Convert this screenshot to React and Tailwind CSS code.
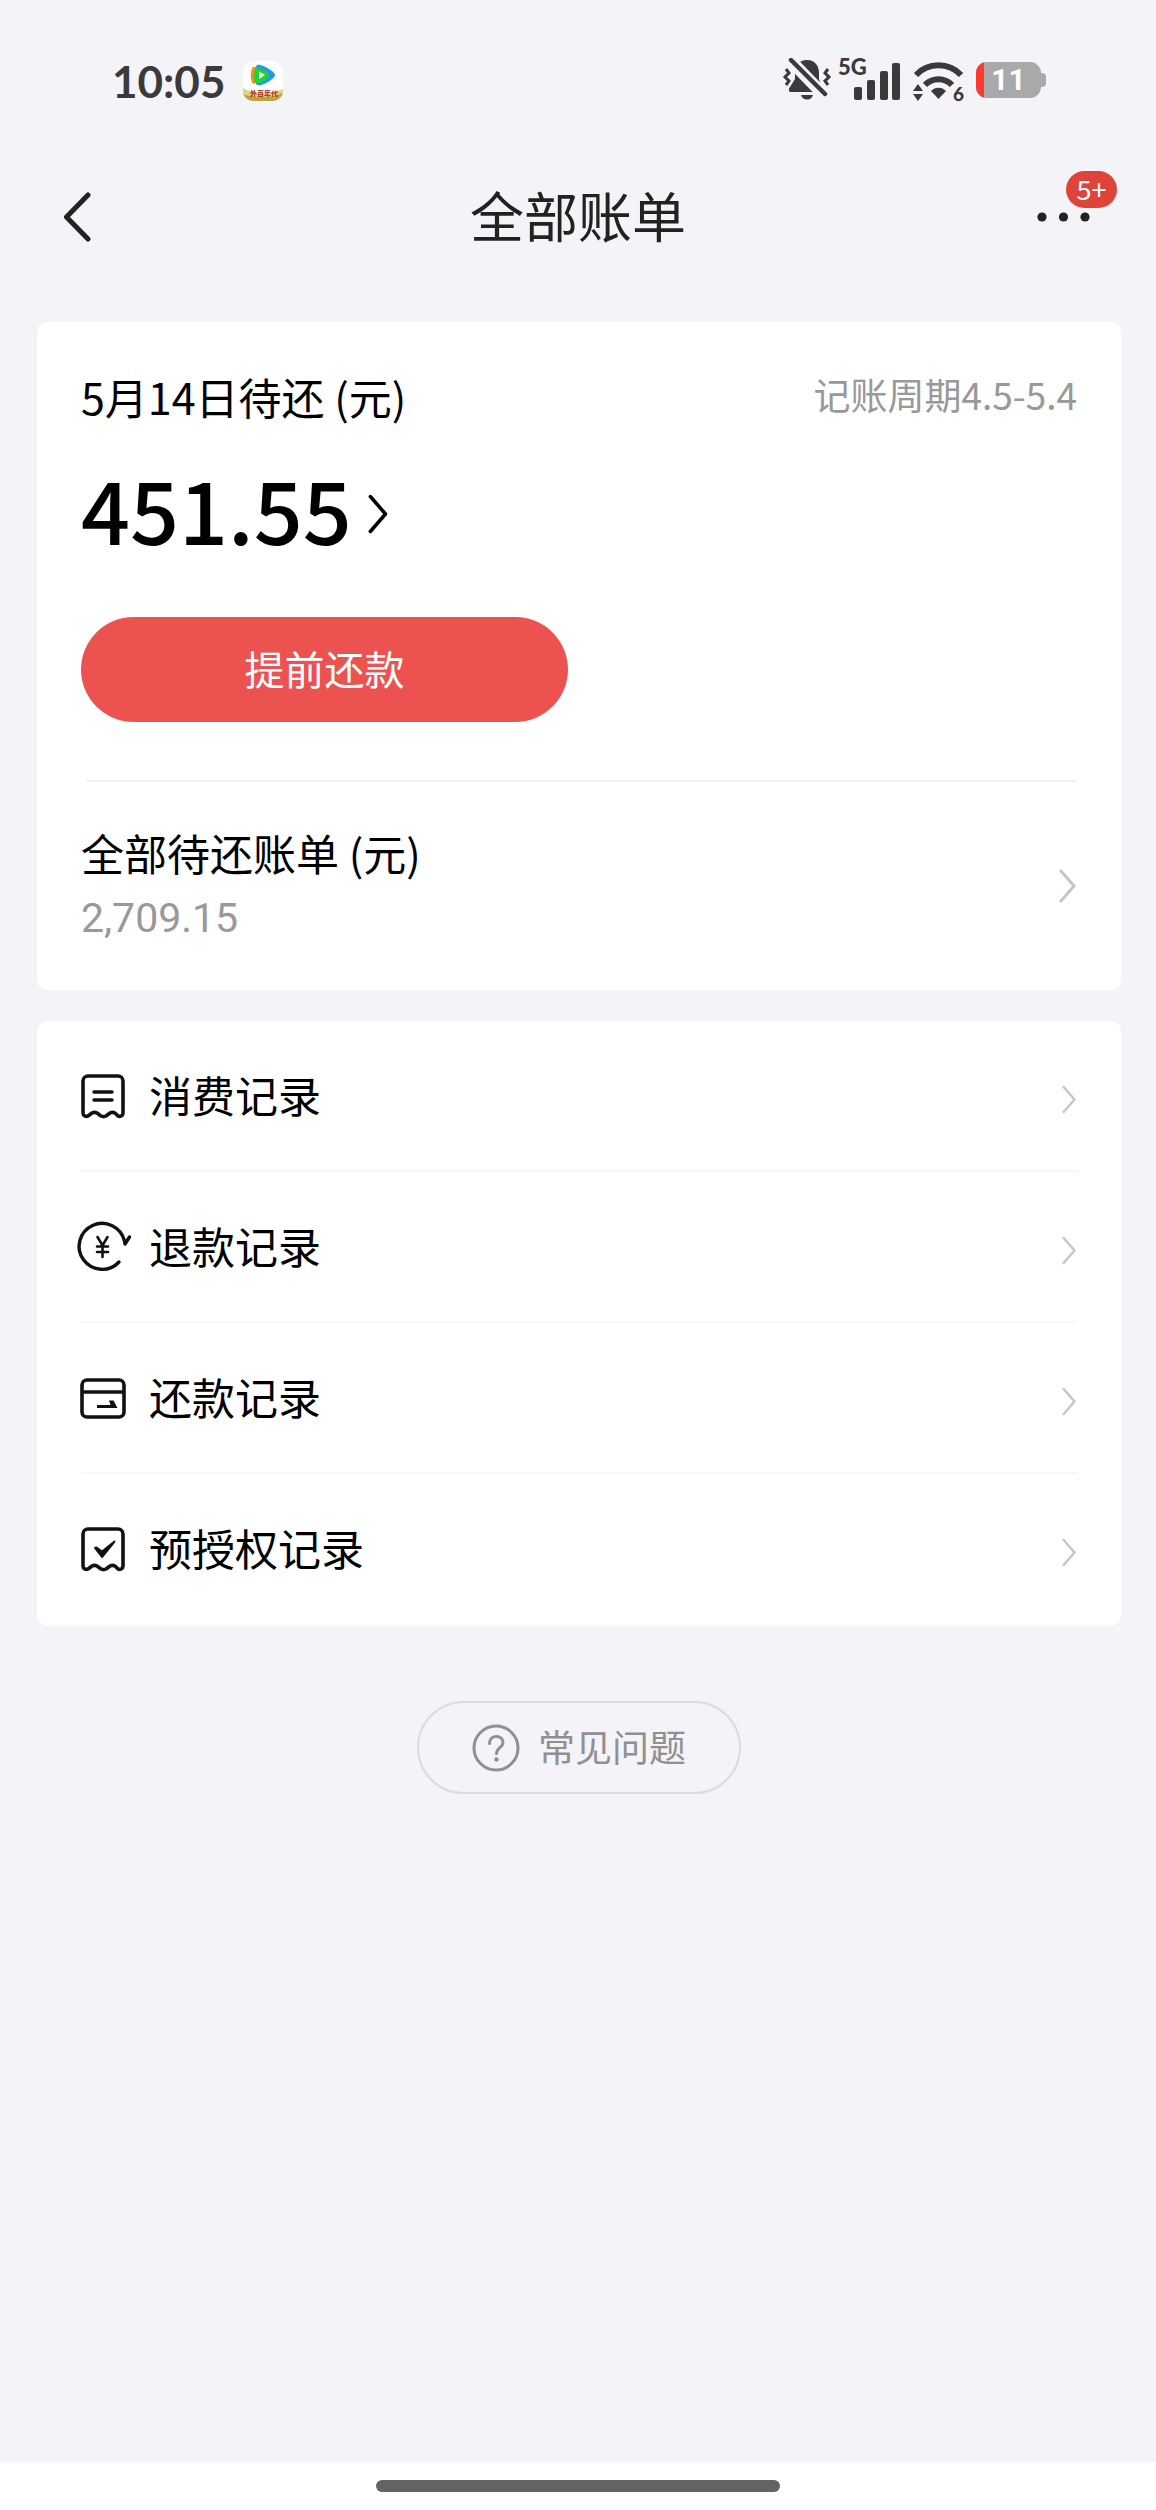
// App.jsx — all bills overview

const RECORDS = [
  { label: '消费记录',   Icon: ReceiptIcon },
  { label: '退款记录',   Icon: RefundIcon },
  { label: '还款记录',   Icon: RepayIcon },
  { label: '预授权记录', Icon: PreAuthIcon },
]

/* ── Icons ─────────────────────────────────────────── */

function Chevron({ className }) {
  return (
    <svg viewBox="0 0 18 34" className={className} fill="none" stroke="currentColor" aria-hidden="true">
      <path d="M2 2 15 17 2 32" strokeWidth="3" strokeLinecap="round" strokeLinejoin="round" />
    </svg>
  )
}

const RECEIPT_OUTLINE =
  'M9 4h30a5 5 0 0 1 5 5v32c0 3-3 4-5 3l-3-3c-2-1-3-1-5 0l-4 3c-2 1-3 1-5 0l-4-3c-2-1-3-1-5 0l-4 3c-2 1-5 0-5-3V9a5 5 0 0 1 5-5z'

function ReceiptIcon() {
  return (
    <svg viewBox="0 0 48 48" className="size-12" fill="none" stroke="#111" strokeWidth="3.6" aria-hidden="true">
      <path d={RECEIPT_OUTLINE} strokeLinejoin="round" />
      <path d="M15 20h18M15 28h18" strokeLinecap="round" strokeWidth="3.4" />
    </svg>
  )
}

function RefundIcon() {
  return (
    <svg viewBox="0 0 52 52" className="size-[52px] overflow-visible" fill="none" stroke="#111" strokeWidth="3.4" aria-hidden="true">
      <path d="M42 41A23 23 0 1 1 47.500 20l.5 3 4.500-7" strokeLinecap="round" strokeLinejoin="round" />
      <path d="m20.500 16 5 8.500 5-8.500M25.500 24.500V36M20 25.500h11M20 31h11" strokeWidth="2.6" strokeLinecap="round" />
    </svg>
  )
}

function RepayIcon() {
  return (
    <svg viewBox="0 0 48 48" className="size-12" fill="none" stroke="#111" strokeWidth="3.6" aria-hidden="true">
      <rect x="3" y="6" width="42" height="37" rx="5" />
      <path d="M3 18h42" strokeWidth="3.4" />
      <path d="M18 31h13.500L30 26.500h4.500L38.500 34H18z" fill="#111" stroke="none" />
    </svg>
  )
}

function PreAuthIcon() {
  return (
    <svg viewBox="0 0 48 48" className="size-12" fill="none" stroke="#111" strokeWidth="3.6" aria-hidden="true">
      <path d={RECEIPT_OUTLINE} strokeLinejoin="round" />
      <path d="m16 23 7 9L35.500 16.500 23 26.500l-5.500-4z" fill="#111" strokeWidth="2" strokeLinejoin="round" />
    </svg>
  )
}

function HelpIcon() {
  return (
    <svg viewBox="0 0 48 48" className="size-12" fill="none" stroke="#909092" strokeWidth="3" aria-hidden="true">
      <circle cx="24" cy="24" r="22" />
      <path d="M17.500 19.500c0-4.500 3-7 6.800-7s6.700 2.500 6.700 6c0 5-6.500 5.500-6.500 11" strokeLinecap="round" />
      <circle cx="24.500" cy="35.500" r="2.200" fill="#909092" stroke="none" />
    </svg>
  )
}

function VideoAppIcon() {
  return (
    <svg viewBox="0 0 40 40" className="size-10" aria-hidden="true">
      <defs>
        <clipPath id="app-tile"><rect width="40" height="40" rx="10" /></clipPath>
      </defs>
      <g clipPath="url(#app-tile)">
        <rect width="40" height="40" fill="#fff" />
        <path d="M0 27c6 4 12 5 20 5s14-1 20-4v12H0z" fill="#e3d27a" />
        <path d="M0 33c10 4 28 4 40-1v8H0z" fill="#b9a544" />
        <path d="M10 6c-3 4-3 13 0 17l5-2V6z" fill="#ff8a1e" />
        <path d="M14 4c3-2 18 6 18 10S18 26 14 24s-2-18 0-20z" fill="#1e9be8" />
        <path d="M13 7c3-1 13 4 13 7s-9 10-13 8-2-14 0-15z" fill="#23cf3a" />
        <path d="M16 10.500 22 14l-6 4z" fill="#fff" />
        <text x="7" y="35" fontSize="7" fontWeight="700" fill="#a8231c">外百年代</text>
      </g>
    </svg>
  )
}

function MutedBellIcon() {
  return (
    <svg viewBox="0 0 50 44" className="-mr-1.5 h-11 w-[50px]" fill="#3a3a3c" aria-hidden="true">
      <path d="M25 2c8 0 12 6 12 13v6l4 13H8c-2-2-1-4 0-5l5-8v-6c0-7 4-13 12-13z" />
      <path d="M19 37h12c-1 3-3 4.500-6 4.500S20 40 19 37z" />
      <path d="M4 -2 42 37" stroke="#f3f3f8" strokeWidth="12" />
      <path d="M9 2 43 36" stroke="#3a3a3c" strokeWidth="4.500" strokeLinecap="round" />
      <path d="M4 11l3 4-4 4 4 4-3 4M46 11l-3 4 4 4-4 4 3 4" fill="none" stroke="#3a3a3c" strokeWidth="3" />
    </svg>
  )
}

function Signal() {
  return (
    <div className="relative">
      <svg viewBox="0 0 62 44" className="h-11 w-[62px]" fill="#3a3a3c" aria-hidden="true">
        <rect x="16" y="29" width="8" height="13" rx="2" />
        <rect x="29" y="22" width="8" height="20" rx="2" />
        <rect x="42" y="13" width="8" height="29" rx="2" />
        <rect x="54" y="5" width="8" height="37" rx="2" />
      </svg>
      <span className="absolute -top-3 left-0 font-['Lato'] text-[22px] leading-[42px] font-black">5G</span>
    </div>
  )
}

function Wifi() {
  return (
    <div className="relative">
      <svg viewBox="0 0 52 44" className="h-11 w-[52px]" fill="#3a3a3c" aria-hidden="true">
        <path d="M4 17a31 31 0 0 1 45 0" fill="none" stroke="#3a3a3c" strokeWidth="6" />
        <path d="M13 27a19 19 0 0 1 27 0" fill="none" stroke="#3a3a3c" strokeWidth="6" />
        <path d="M19 33c4-4.500 11-4.500 15 0l-7.500 8z" />
        <path d="M1 33l5-7 5 7zM1 36h10l-5 7z" />
      </svg>
      <span className="absolute right-0 -bottom-1.5 font-['Lato'] text-[19px] leading-[28px] font-black">6</span>
    </div>
  )
}

function Battery() {
  return (
    <div className="flex items-center" aria-label="11%">
      <div className="flex h-9 w-[65px] overflow-hidden rounded-[11px] bg-[#a9a9ac]">
        <div className="w-2 bg-[#fb3b30]" />
        <span className="flex-1 pr-2 text-center font-['Roboto'] text-[30px] leading-[36px] font-bold text-white">11</span>
      </div>
      <div className="h-3.5 w-[5px] rounded-r-[4px] bg-[#a9a9ac]" />
    </div>
  )
}

/* ── Page sections ─────────────────────────────────── */

function StatusBar() {
  return (
    <div className="flex h-[160px] items-center justify-between pl-[112px] pr-[110px] text-[#3a3a3c]">
      <div className="flex items-center gap-[18px] pt-0.5">
        <span className="font-['Lato'] text-[44px] leading-[52px] font-bold">10:05</span>
        <VideoAppIcon />
      </div>
      <div className="flex items-center gap-3">
        <MutedBellIcon />
        <Signal />
        <Wifi />
        <Battery />
      </div>
    </div>
  )
}

function Header() {
  return (
    <header className="grid h-[114px] grid-cols-[1fr_auto_1fr] items-center px-16">
      <button type="button" aria-label="返回" className="justify-self-start">
        <svg viewBox="0 0 30 52" className="h-[52px] w-[30px]" fill="none" stroke="#222" aria-hidden="true">
          <path d="M24 4 2.500 26 24 48" strokeWidth="5" strokeLinecap="round" strokeLinejoin="round" />
        </svg>
      </button>
      <h1 className="pb-1 text-[54px] leading-[64px] text-[#222]">全部账单</h1>
      <button type="button" aria-label="更多" className="relative justify-self-end">
        <svg viewBox="0 0 56 20" className="h-5 w-14" fill="#222" aria-hidden="true">
          <circle cx="6" cy="10" r="4.600" />
          <circle cx="27.500" cy="10" r="4.600" />
          <circle cx="49" cy="10" r="4.600" />
        </svg>
        <span className="absolute -top-9 left-[30px] flex h-[37px] w-[51px] items-center justify-center rounded-full bg-[#e04339] pb-0.5 text-[27px] leading-none text-white">
          5+
        </span>
      </button>
    </header>
  )
}

function BillCard() {
  return (
    <section className="rounded-[10px] bg-white px-11 pt-[44px] pb-[44px]">
      <div className="flex items-start justify-between">
        <h2 className="text-[43px] leading-[60px]">5月14日待还 (元)</h2>
        <span className="pt-0.5 text-[37px] leading-[52px] text-[#999]">记账周期4.5-5.4</span>
      </div>

      <a href="#current" className="mt-[44px] flex w-fit items-center gap-4">
        <span className="pb-3 text-[86px] leading-[76px] font-medium">451.55</span>
        <Chevron className="h-10 w-[21px]" />
      </a>

      <button
        type="button"
        className="mt-[59px] block h-[105px] w-[487px] rounded-full bg-[#ec524f] pb-1 text-[40px] leading-[56px] text-white"
      >
        提前还款
      </button>

      <hr className="mt-[58px] ml-[5px] border-t-2 border-[#f1f1f1]" />

      <a href="#all" className="mt-[40px] flex items-center justify-between">
        <span className="flex flex-col gap-2">
          <span className="text-[43px] leading-[60px]">全部待还账单 (元)</span>
          <span className="font-['Roboto'] text-[41px] leading-[56px] text-[#999]">2,709.15</span>
        </span>
        <Chevron className="mt-1 h-[34px] w-[18px] text-[#c6c6c6]" />
      </a>
    </section>
  )
}

function RecordList() {
  return (
    <ul className="mt-[31px] rounded-[10px] bg-white px-11 pb-px">
      {RECORDS.map(({ label, Icon }) => (
        <li key={label} className="border-b-2 border-[#f7f7f7] last:border-transparent">
          <a href={`#${label}`} className="flex h-[149px] items-center">
            <span className="mr-5 -ml-1 flex w-[52px] shrink-0 justify-center">
              <Icon />
            </span>
            <span className="pb-1 text-[43px] leading-[60px]">{label}</span>
            <Chevron className="mt-2 ml-auto h-[29px] w-[15px] text-[#c6c6c6]" />
          </a>
        </li>
      ))}
    </ul>
  )
}

export default function App() {
  return (
    <div className="flex min-h-screen flex-col bg-[#f3f3f8] font-['Noto_Sans_CJK_SC',sans-serif] text-black">
      <StatusBar />
      <Header />

      <main className="pt-12 pr-[35px] pl-[37px]">
        <BillCard />
        <RecordList />

        <button
          type="button"
          className="mx-auto mt-[75px] flex h-[93px] items-center gap-[18px] rounded-full border-2 border-[#dcdce0] px-[53px] text-[37px] leading-[48px] text-[#909092]"
        >
          <HelpIcon />
          <span className="pb-1">常见问题</span>
        </button>
      </main>

      {/* Gesture bar */}
      <footer className="mt-auto flex h-12 items-center justify-center bg-white">
        <div className="h-3 w-[35%] rounded-full bg-[#646464]" />
      </footer>
    </div>
  )
}
